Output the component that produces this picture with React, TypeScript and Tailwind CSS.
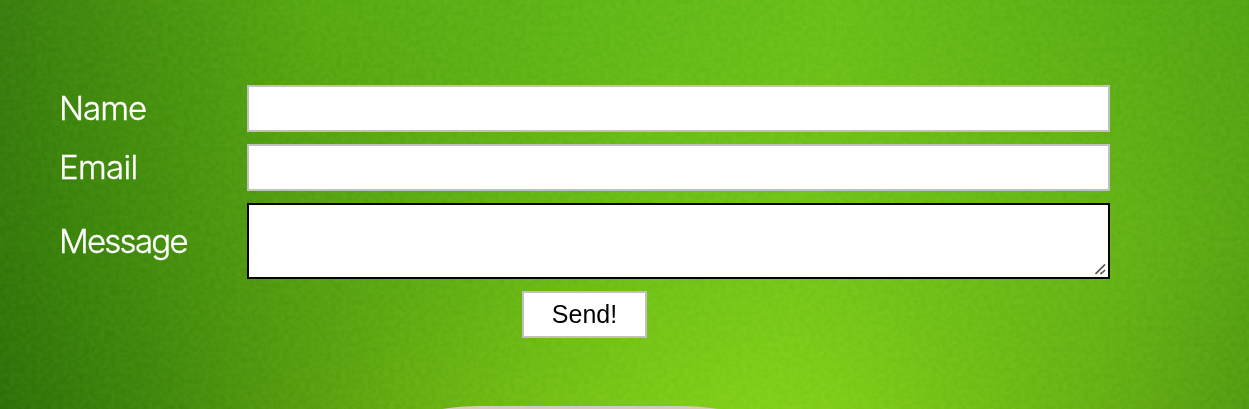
const layer = 'col-start-1 row-start-1';
const label = 'text-[33px] leading-[40px] text-white font-light font-[Inter,sans-serif] [-webkit-text-stroke:0.35px_white]';
const field = 'block w-[863px] border-2 bg-white outline-none px-2';

function Backdrop() {
  return (
    <>
      <div className={`${layer} bg-[linear-gradient(90deg,#3b8010_0px,#468f10_110px,#4d9c12_208px,#59aa12_312px,#5cae16_416px,#62b919_620px,#6bc019_832px,#60b317_1040px,#55a614_1249px)]`} />
      <div className={`${layer} bg-[linear-gradient(90deg,#367a0c_0px,#3f880d_100px,#509a11_247px,#5dab14_416px,#70c118_650px,#74c51a_800px,#66b518_1110px,#59a614_1249px)] [mask-image:linear-gradient(transparent,black_50%)]`} />
      <div className={`${layer} bg-[linear-gradient(90deg,#2d6d09_0px,#3c830d_140px,#589b0f_290px,#6fb312_416px,#7ec716_560px,#8bd71a_760px,#87d219_850px,#73bd14_1000px,#62a713_1150px,#529612_1249px)] [mask-image:linear-gradient(transparent_50%,black)]`} />
      <svg className={`${layer} h-full w-full opacity-[0.07] mix-blend-soft-light`} aria-hidden="true">
        <filter id="grain" colorInterpolationFilters="sRGB">
          <feTurbulence type="fractalNoise" baseFrequency="0.19" numOctaves="3" seed="8" />
          <feColorMatrix values="2 0 0 0 -0.5  2 0 0 0 -0.5  2 0 0 0 -0.5  0 0 0 0 1" />
        </filter>
        <rect width="100%" height="100%" filter="url(#grain)" />
      </svg>
    </>
  );
}

export default function App() {
  return (
    <main className="isolate grid h-[409px] w-[1249px] overflow-hidden">
      <Backdrop />
      <div className={`${layer} z-10 flex flex-col pt-[85px]`}>
        <form className="flex flex-col" onSubmit={(e) => e.preventDefault()}>
          <div className="grid grid-cols-[188px_863px] items-center gap-y-3 pl-[59px]">
            <label htmlFor="name" className={`${label} mb-0.5 tracking-[-1px]`}>Name</label>
            <input id="name" className={`${field} h-[47px] border-[#c0c0c0]`} />
            <label htmlFor="email" className={`${label} mb-0.5 tracking-[-0.7px]`}>Email</label>
            <input id="email" className={`${field} h-[47px] border-[#c0c0c0]`} />
            <label htmlFor="message" className={`${label} tracking-[-1.75px]`}>Message</label>
            <div className="relative">
              <textarea id="message" className={`${field} h-[76px] resize-none border-black`} />
              <svg className="absolute right-1 bottom-1 h-[11px] w-[11px]" viewBox="0 0 11 11" fill="none" stroke="#505050" strokeWidth="1.7" aria-hidden="true">
                <path d="M0.5 10 10 0.5M5.5 10 7.2 8.5M7.5 8.5 10 6" />
              </svg>
            </div>
          </div>
          <button className="mt-3 ml-[522px] h-[47px] w-[125px] border-2 border-[#c0c0c0] bg-white pb-0.5 font-['Liberation_Sans',sans-serif] text-[25px] leading-[28px] text-black">Send!</button>
        </form>
        <div className="mt-[68px] ml-[380px] h-[90px] w-[400px] shrink-0 rounded-[100px/40px] bg-[#d5c9bb]" />
      </div>
    </main>
  );
}
